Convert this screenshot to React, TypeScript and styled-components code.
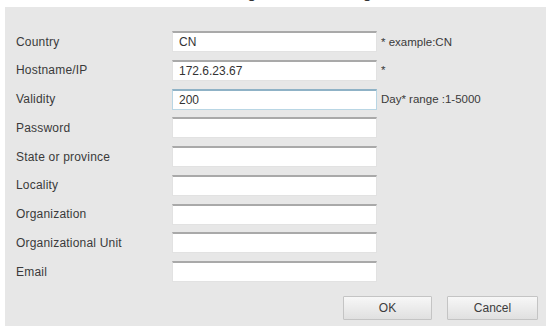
import React from 'react';
import styled, { createGlobalStyle } from 'styled-components';

const GlobalStyle = createGlobalStyle`
  html, body {
    margin: 0;
    padding: 0;
    background: #ffffff;
  }
  body {
    font-family: 'Liberation Sans', Arial, sans-serif;
  }
`;

const Page = styled.div`
  width: 546px;
  height: 326px;
  display: flex;
  flex-direction: column;
  overflow: hidden;
  background: #ffffff;
`;

// dialog title, scrolled mostly out of view: only its descenders peek through
const TitleStrip = styled.div`
  height: 7px;
  overflow: hidden;
  display: flex;
  justify-content: center;
`;

const Title = styled.div`
  margin-top: -15px;
  padding-right: 24px;
  font-size: 16px;
  line-height: 16px;
  color: #333;
  white-space: nowrap;
`;

const Panel = styled.div`
  flex: 1;
  margin-left: 5px;
  background: #e7e7e7;
  padding: 24px 8px 0 11px;
  display: flex;
  flex-direction: column;
`;

const Form = styled.div`
  display: grid;
  grid-template-columns: 156px 205px 1fr;
  grid-auto-rows: 21px;
  row-gap: 7.75px;
  align-items: center;
`;

const Label = styled.div`
  font-size: 12px;
  letter-spacing: 0.2px;
  color: #3a3a3a;
`;

const Field = styled.input<{ $focused?: boolean }>`
  box-sizing: border-box;
  width: 205px;
  height: 21px;
  margin: 0;
  padding: 0 0 0 6px;
  font-family: 'Liberation Sans', Arial, sans-serif;
  font-size: 12px;
  color: #333;
  background: #ffffff;
  border: 1px solid ${(p) => (p.$focused ? '#b9d6e4' : '#e2e2e2')};
  border-top: 2px solid ${(p) => (p.$focused ? '#8fb2c6' : '#a9a9a9')};
  outline: none;
`;

const Hint = styled.div`
  padding-left: 4px;
  font-size: 11.5px;
  color: #3a3a3a;
  white-space: nowrap;
`;

const Actions = styled.div`
  display: flex;
  justify-content: flex-end;
  gap: 15px;
  margin-top: 14px;
`;

const Button = styled.button<{ $width: number }>`
  width: ${(p) => p.$width}px;
  height: 24px;
  font-family: 'Liberation Sans', Arial, sans-serif;
  font-size: 12px;
  color: #3c3c3c;
  background: linear-gradient(#f7f7f7, #e0e0e0);
  border: 1px solid #c4c4c4;
  border-radius: 1px;
  padding: 0;
`;

const rows = [
  { label: 'Country', value: 'CN', hint: '* example:CN' },
  { label: 'Hostname/IP', value: '172.6.23.67', hint: '*' },
  { label: 'Validity', value: '200', hint: 'Day*  range :1-5000', focused: true },
  { label: 'Password', value: '' },
  { label: 'State or province', value: '' },
  { label: 'Locality', value: '' },
  { label: 'Organization', value: '' },
  { label: 'Organizational Unit', value: '' },
  { label: 'Email', value: '' },
];

const App: React.FC = () => {
  return (
    <Page>
      <GlobalStyle />
      <TitleStrip>
        <Title>Create Self-signed Certificating</Title>
      </TitleStrip>
      <Panel>
        <Form>
          {rows.map((r) => (
            <React.Fragment key={r.label}>
              <Label>{r.label}</Label>
              <Field
                type={r.label === 'Password' ? 'password' : 'text'}
                defaultValue={r.value}
                $focused={r.focused}
              />
              <Hint>{r.hint ?? ''}</Hint>
            </React.Fragment>
          ))}
        </Form>
        <Actions>
          <Button $width={89}>OK</Button>
          <Button $width={91}>Cancel</Button>
        </Actions>
      </Panel>
    </Page>
  );
};

export default App;
